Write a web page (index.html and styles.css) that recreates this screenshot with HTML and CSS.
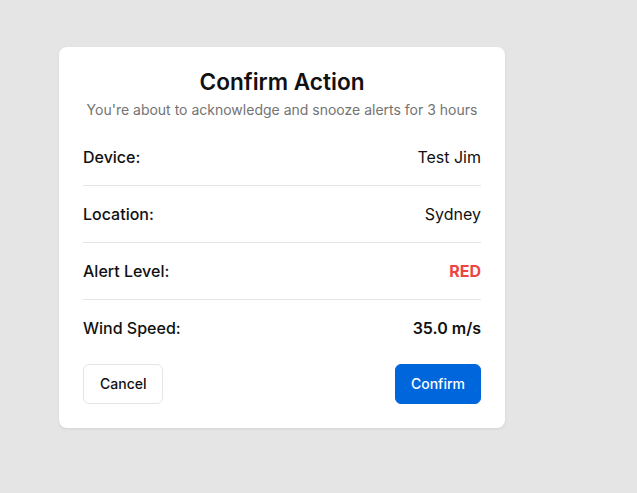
FILE: index.html
```html
<!DOCTYPE html>
<html lang="en">
<head>
<meta charset="utf-8">
<title>Confirm Action</title>
<link rel="stylesheet" href="styles.css">
</head>
<body>
  <div class="dialog">
    <h1 class="title">Confirm Action</h1>
    <p class="subtitle">You're about to acknowledge and snooze alerts for 3 hours</p>
    <div class="rows">
      <div class="row"><span class="label">Device:</span><span class="value">Test Jim</span></div>
      <div class="row"><span class="label">Location:</span><span class="value">Sydney</span></div>
      <div class="row"><span class="label">Alert Level:</span><span class="value red">RED</span></div>
      <div class="row"><span class="label">Wind Speed:</span><span class="value strong">35.0 m/s</span></div>
    </div>
    <div class="actions">
      <button class="btn btn-cancel">Cancel</button>
      <button class="btn btn-confirm">Confirm</button>
    </div>
  </div>
</body>
</html>
```
FILE: styles.css
```css
* { box-sizing: border-box; }
html, body { margin: 0; }
body {
  background: #e5e5e5;
  font-family: Inter, "Noto Sans", sans-serif;
  color: #111;
  padding: 47px 0 0 59px;
  min-height: 493px;
}
.dialog {
  width: 446px;
  background: #fff;
  border-radius: 8px;
  box-shadow: 0 1px 3px rgba(0,0,0,0.08);
  padding: 21px 24px 24px;
}
.title {
  margin: 0;
  text-align: center;
  font-size: 22.6px;
  line-height: 28px;
  font-weight: 600;
  color: #111;
}
.subtitle {
  margin: 4px 0 9px;
  text-align: center;
  font-size: 14px;
  line-height: 20px;
  color: #737373;
}
.rows { display: flex; flex-direction: column; }
.row {
  display: flex;
  justify-content: space-between;
  align-items: center;
  padding: 16px 0;
  font-size: 16px;
  line-height: 24px;
  border-bottom: 1px solid #e5e5e5;
}
.row:last-child { border-bottom: none; }
.label { color: #111; font-weight: 500; }
.value { color: #111; }
.value.red { color: #ef4444; font-weight: 700; }
.value.strong { font-weight: 600; }
.actions {
  display: flex;
  justify-content: space-between;
  margin-top: 8px;
}
.btn {
  font-family: inherit;
  font-size: 14px;
  line-height: 20px;
  font-weight: 500;
  padding: 9px 16px;
  border-radius: 6px;
  cursor: pointer;
}
.btn-cancel {
  background: #fff;
  color: #111;
  border: 1px solid #e5e5e5;
}
.btn-confirm {
  background: #0066db;
  color: #fff;
  border: 1px solid #0066db;
  padding: 9px 15px;
}
```
